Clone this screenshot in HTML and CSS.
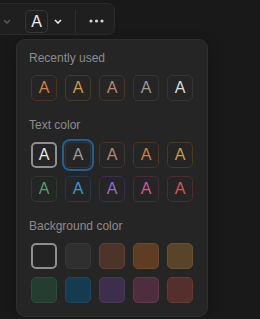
FILE: index.html
```html
<!DOCTYPE html>
<html lang="en">
<head>
    <meta charset="UTF-8">
    <meta name="viewport" content="width=device-width, initial-scale=1.0">
    <title>Color menu</title>
    <link rel="stylesheet" href="styles.css">
</head>
<body>
    <!-- formatting toolbar, cut off on the left -->
    <div class="toolbar">
        <svg class="chev-prev" width="8" height="5" viewBox="0 0 8 5"><path d="M1 1l3 3 3-3" fill="none" stroke="#5a5a5a" stroke-width="1.4"/></svg>
        <div class="color-btn">A</div>
        <svg class="chev" width="8" height="5" viewBox="0 0 8 5"><path d="M1 1l3 3 3-3" fill="none" stroke="#e6e6e6" stroke-width="1.6"/></svg>
        <div class="divider"></div>
        <svg class="dots" width="15" height="4" viewBox="0 0 15 4"><circle cx="2" cy="2" r="1.6" fill="#d4d4d4"/><circle cx="7.5" cy="2" r="1.6" fill="#d4d4d4"/><circle cx="13" cy="2" r="1.6" fill="#d4d4d4"/></svg>
    </div>

    <div class="menu">
        <div class="label">Recently used</div>
        <div class="grid">
            <div class="sw t-orange">A</div>
            <div class="sw t-yellow">A</div>
            <div class="sw t-brown">A</div>
            <div class="sw t-gray">A</div>
            <div class="sw t-default">A</div>
        </div>

        <div class="label">Text color</div>
        <div class="grid">
            <div class="sw t-default current">A</div>
            <div class="sw t-gray focused">A</div>
            <div class="sw t-brown">A</div>
            <div class="sw t-orange">A</div>
            <div class="sw t-yellow">A</div>
            <div class="sw t-green">A</div>
            <div class="sw t-blue">A</div>
            <div class="sw t-purple">A</div>
            <div class="sw t-pink">A</div>
            <div class="sw t-red">A</div>
        </div>

        <div class="label bg-label">Background color</div>
        <div class="grid">
            <div class="sw b-default current"></div>
            <div class="sw b-gray"></div>
            <div class="sw b-brown"></div>
            <div class="sw b-orange"></div>
            <div class="sw b-yellow"></div>
            <div class="sw b-green"></div>
            <div class="sw b-blue"></div>
            <div class="sw b-purple"></div>
            <div class="sw b-pink"></div>
            <div class="sw b-red"></div>
        </div>
    </div>
</body>
</html>
```

FILE: styles.css
```css
body {
    margin: 0;
    background-color: #191919;
    font-family: "Liberation Sans", Arial, sans-serif;
    overflow: hidden;
}
.toolbar {
    display: inline-flex;
    align-items: center;
    margin-top: 3px;
    margin-left: -12px;
    padding: 6px 10px 2px 14px;
    height: 32px;
    box-sizing: border-box;
    background-color: #1f1f1f;
    border: 1px solid #2a2a2a;
    border-radius: 7px;
}
.chev-prev {
    margin-right: 14px;
}
.color-btn {
    width: 23px;
    height: 23px;
    box-sizing: border-box;
    border: 1px solid #363636;
    border-radius: 5px;
    color: #ececec;
    font-size: 16px;
    line-height: 21px;
    text-align: center;
}
.chev {
    margin-left: 6px;
}
.divider {
    width: 1px;
    height: 23px;
    margin: 0 13px 0 13px;
    background-color: #2f2f2f;
}
.menu {
    width: 192px;
    margin: 4px 0 0 16px;
    padding: 10px 12px 13px 12px;
    box-sizing: border-box;
    background-color: #252525;
    border: 1px solid #2e2e2e;
    border-radius: 9px;
    box-shadow: 0 4px 14px rgba(0, 0, 0, 0.3);
}
.label {
    font-size: 12px;
    line-height: 16px;
    color: #8c8c8c;
    margin-bottom: 9px;
}
.bg-label {
    margin-top: 1px;
}
.grid {
    display: grid;
    grid-template-columns: repeat(5, 26px);
    gap: 8px;
    margin-left: 2px;
    margin-bottom: 16px;
}
.grid:last-child {
    margin-bottom: 0;
}
.sw {
    width: 26px;
    height: 26px;
    box-sizing: border-box;
    border: 1px solid #353535;
    border-radius: 5px;
    display: flex;
    align-items: center;
    justify-content: center;
    font-size: 16px;
}
.current {
    border: 2px solid #8e8e8e;
}
.focused {
    box-shadow: 0 0 0 1px #252525, 0 0 0 3px #235f8f;
}

/* text colors */
.t-default { color: #dcdcdc; }
.t-gray    { color: #9b9b9b; }
.t-brown   { color: #ba856f; border-color: #45352d; }
.t-orange  { color: #d1803f; border-color: #4a3523; }
.t-yellow  { color: #cb9b48; border-color: #473a26; }
.t-green   { color: #529e72; border-color: #2b3b32; }
.t-blue    { color: #379ad3; border-color: #24394a; }
.t-purple  { color: #9d68d3; border-color: #3a2f4a; }
.t-pink    { color: #d15796; border-color: #482b3a; }
.t-red     { color: #df5452; border-color: #4a2d2c; }
.grid .t-default.current { color: #e6e6e6; }

/* background colors */
.b-default { background-color: #232323; }
.b-gray    { background-color: #2f2f2f; border-color: #383838; }
.b-brown   { background-color: #4d3429; border-color: #5e4033; }
.b-orange  { background-color: #5e3d22; border-color: #70492a; }
.b-yellow  { background-color: #584529; border-color: #685233; }
.b-green   { background-color: #243d30; border-color: #2e4c3b; }
.b-blue    { background-color: #143b50; border-color: #1c4961; }
.b-purple  { background-color: #3d2e4b; border-color: #4b395c; }
.b-pink    { background-color: #502d3e; border-color: #62384c; }
.b-red     { background-color: #542f2b; border-color: #673a35; }
```
